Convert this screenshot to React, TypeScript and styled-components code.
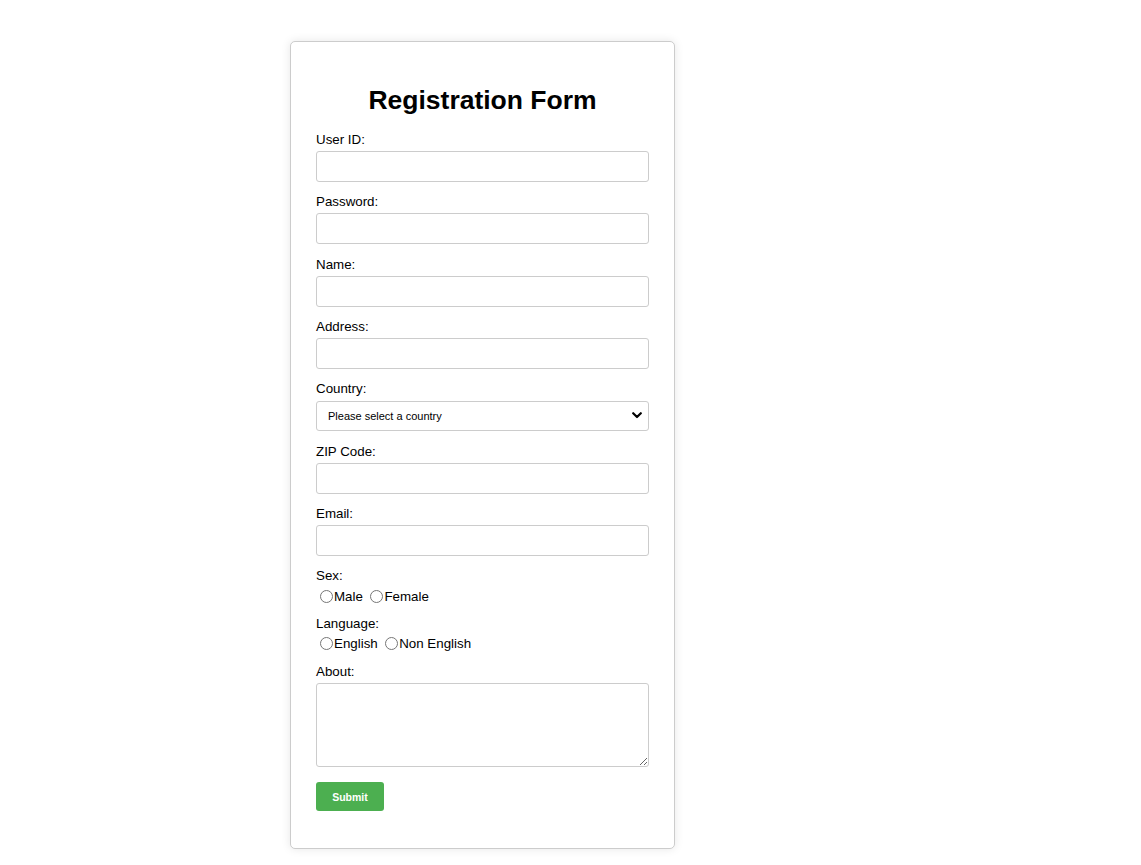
import React from "react";
import styled, { createGlobalStyle } from "styled-components";

const GlobalStyle = createGlobalStyle`
  html, body {
    margin: 0;
    padding: 0;
    background: #ffffff;
    font-family: "Liberation Sans", Arial, sans-serif;
    color: #000;
  }
`;

const Page = styled.div`
  padding: 41px 0 16px 290px;
`;

const Card = styled.form`
  box-sizing: border-box;
  width: 385px;
  height: 808px;
  border: 1px solid #cccccc;
  border-radius: 5px;
  box-shadow: 0 0 10px rgba(0, 0, 0, 0.1);
  padding: 20px 25px 37px;
  background: #fff;
`;

const Title = styled.h2`
  margin: 23px 0 16px;
  text-align: center;
  font-size: 26.5px;
  line-height: 30px;
  font-weight: bold;
`;

const FieldLabel = styled.label`
  display: block;
  font-size: 13.33px;
  line-height: 16px;
  padding-top: 1px;
  margin-bottom: 3px;
`;

const TextInput = styled.input`
  display: block;
  box-sizing: border-box;
  width: 100%;
  height: 31px;
  margin: 0 0 11.33px;
  padding: 6px 8px;
  border: 1px solid #cccccc;
  border-radius: 3px;
  font-family: inherit;
  font-size: 13.33px;
  outline: none;
`;

const SelectWrap = styled.div`
  position: relative;
  padding-top: 1px;
  margin: 0 0 11.33px;
`;

const Select = styled.select`
  display: block;
  box-sizing: border-box;
  width: 100%;
  height: 30px;
  margin: 0;
  padding: 0 24px 0 11px;
  border: 1px solid #cccccc;
  border-radius: 3px;
  background: #fff;
  color: #000;
  font-family: "Liberation Sans", Arial, sans-serif;
  font-size: 11px;
  appearance: none;
  -webkit-appearance: none;
  outline: none;
`;

const Chevron = styled.svg`
  position: absolute;
  right: 7px;
  top: 12px;
  width: 10px;
  height: 7px;
  pointer-events: none;
`;

const RadioRow = styled.div`
  display: flex;
  align-items: center;
  height: 18px;
  margin: 2.33px 0 9.67px;
  font-size: 13.33px;
`;

const RadioOption = styled.label`
  display: inline-flex;
  align-items: center;
  margin-right: 3.5px;
`;

const Radio = styled.input`
  width: 13px;
  height: 13px;
  margin: 0 1px 0 4px;
`;

const TextArea = styled.textarea`
  display: block;
  box-sizing: border-box;
  width: 100%;
  height: 84px;
  margin: 0 0 15px;
  padding: 6px 8px;
  border: 1px solid #cccccc;
  border-radius: 3px;
  font-family: inherit;
  font-size: 13.33px;
  resize: vertical;
`;

const SubmitButton = styled.button`
  display: block;
  box-sizing: border-box;
  width: 68px;
  height: 29px;
  padding: 2px 0 0;
  border: none;
  border-radius: 3px;
  background: #4caf50;
  color: #fff;
  font-family: "Liberation Sans", Arial, sans-serif;
  font-size: 10.5px;
  font-weight: bold;
  cursor: pointer;
`;

export default function App() {
  return (
    <>
      <GlobalStyle />
      <Page>
        <Card onSubmit={(e) => e.preventDefault()}>
          <Title>Registration Form</Title>

          <FieldLabel htmlFor="userid">User ID:</FieldLabel>
          <TextInput id="userid" type="text" />

          <FieldLabel htmlFor="password">Password:</FieldLabel>
          <TextInput id="password" type="password" />

          <FieldLabel htmlFor="name">Name:</FieldLabel>
          <TextInput id="name" type="text" />

          <FieldLabel htmlFor="address">Address:</FieldLabel>
          <TextInput id="address" type="text" />

          <FieldLabel htmlFor="country">Country:</FieldLabel>
          <SelectWrap>
            <Select id="country" defaultValue="">
              <option value="">Please select a country</option>
              <option value="us">United States</option>
              <option value="uk">United Kingdom</option>
              <option value="in">India</option>
            </Select>
            <Chevron viewBox="0 0 10 7" aria-hidden="true">
              <polyline
                points="1.2,1.2 5,5 8.8,1.2"
                fill="none"
                stroke="#000"
                strokeWidth="2.2"
                strokeLinecap="round"
                strokeLinejoin="round"
              />
            </Chevron>
          </SelectWrap>

          <FieldLabel htmlFor="zip">ZIP Code:</FieldLabel>
          <TextInput id="zip" type="text" />

          <FieldLabel htmlFor="email">Email:</FieldLabel>
          <TextInput id="email" type="email" />

          <FieldLabel as="div">Sex:</FieldLabel>
          <RadioRow>
            <RadioOption>
              <Radio type="radio" name="sex" value="male" />
              Male
            </RadioOption>
            <RadioOption>
              <Radio type="radio" name="sex" value="female" />
              Female
            </RadioOption>
          </RadioRow>

          <FieldLabel as="div">Language:</FieldLabel>
          <RadioRow>
            <RadioOption>
              <Radio type="radio" name="language" value="en" />
              English
            </RadioOption>
            <RadioOption>
              <Radio type="radio" name="language" value="non-en" />
              Non English
            </RadioOption>
          </RadioRow>

          <FieldLabel htmlFor="about">About:</FieldLabel>
          <TextArea id="about" />

          <SubmitButton type="submit">Submit</SubmitButton>
        </Card>
      </Page>
    </>
  );
}
